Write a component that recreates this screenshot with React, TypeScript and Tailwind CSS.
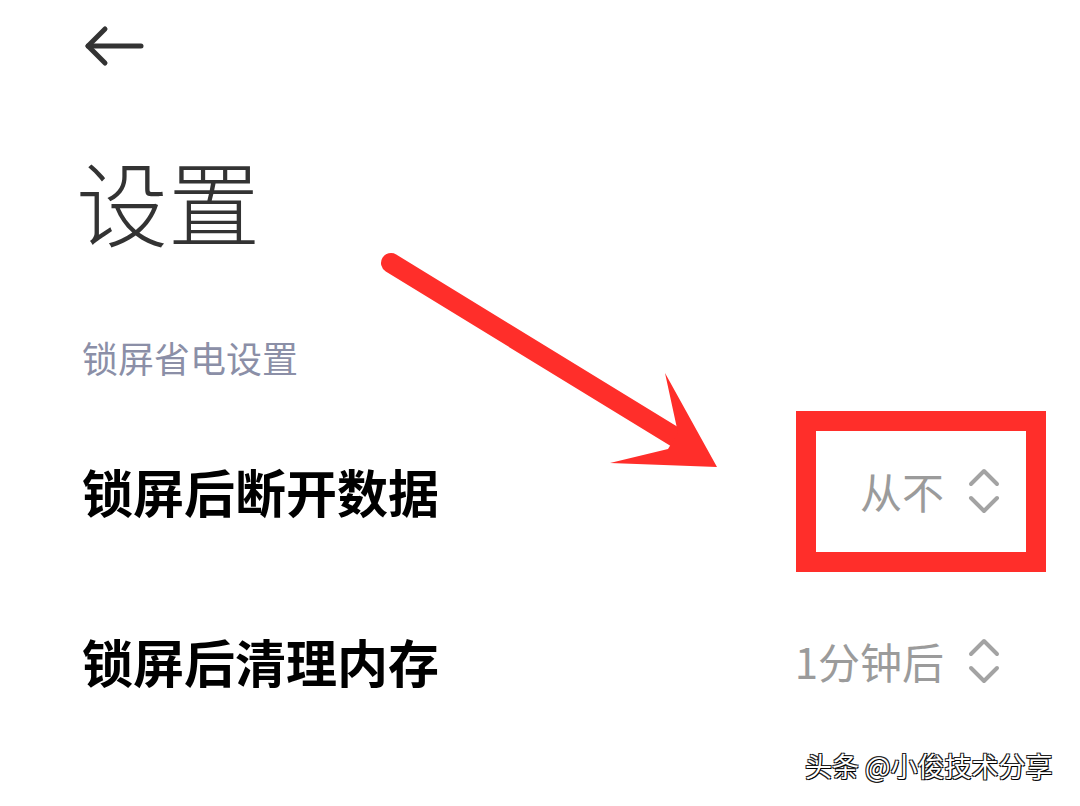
const cjk = { fontFamily: '"Noto Sans CJK SC", "Noto Sans", sans-serif' };

const UpDown = () => (
  <svg width="32" height="46" viewBox="0 0 32 46" fill="none" stroke="#a3a3a3" strokeWidth="4" strokeLinecap="round" strokeLinejoin="round">
    <path d="M3 16 L16 3 L29 16" />
    <path d="M3 30 L16 43 L29 30" />
  </svg>
);

const Row = ({ label, value }: { label: string; value: string }) => (
  <div className="flex h-[100px] items-center justify-between">
    <span className="text-[51px] font-bold leading-none text-black">{label}</span>
    <div className="flex items-center gap-[24px]">
      <span className="text-[42px] leading-none text-[#9b9b9b]">{value}</span>
      <UpDown />
    </div>
  </div>
);

const App = () => {
  return (
    <div className="relative h-[806px] w-[1080px] overflow-hidden bg-white" style={cjk}>
      <div className="flex flex-col pl-[82px] pr-[80px]">
        {/* back */}
        <svg className="mt-[24px]" width="62" height="44" viewBox="82 24 62 44" fill="none" stroke="#333" strokeWidth="5" strokeLinecap="round" strokeLinejoin="round">
          <path d="M141 46 H88" />
          <path d="M105 29 L88 46 L105 63" />
        </svg>

        <h1 className="-ml-[6px] mt-[86px] text-[92px] font-light leading-none text-[#333]">设置</h1>

        <div className="mt-[93px] text-[36px] leading-none text-[#8b8fa7]">锁屏省电设置</div>

        <div className="mt-[66px] flex flex-col gap-[70px]">
          <Row label="锁屏后断开数据" value="从不" />
          <Row label="锁屏后清理内存" value="1分钟后" />
        </div>
      </div>

      {/* annotation */}
      <div className="absolute left-[796px] top-[411px] h-[161px] w-[250px] border-[20px] border-[#ff2e2a]" />
      <svg className="absolute left-0 top-0" width="1080" height="806" viewBox="0 0 1080 806">
        <line x1="391" y1="263" x2="680" y2="440" stroke="#ff2e2a" strokeWidth="20" strokeLinecap="round" />
        <polygon points="717,467 610,463 668,449 678,433 665,373" fill="#ff2e2a" />
      </svg>

      <div className="absolute left-[805px] top-[752px] text-[27px] leading-none text-white [text-shadow:1px_1px_0_#000,-1px_-1px_0_#222,1px_-1px_0_#222,-1px_1px_0_#222]">
        头条 @小俊技术分享
      </div>
    </div>
  );
};

export default App;
